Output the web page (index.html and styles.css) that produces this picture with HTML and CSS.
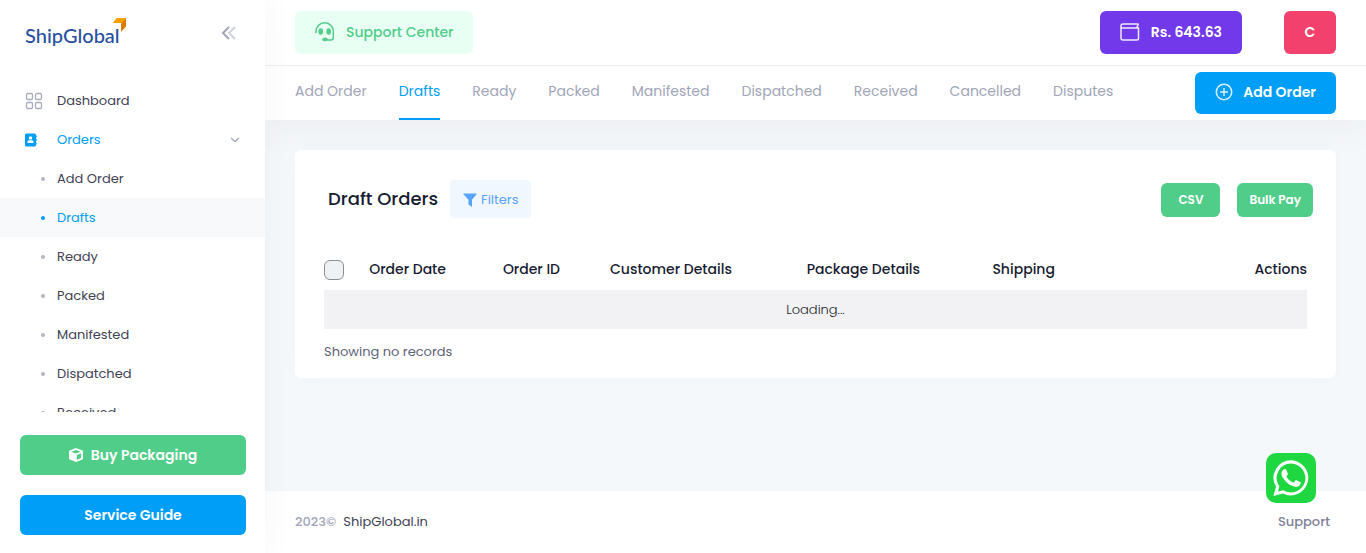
FILE: index.html
```html
<!DOCTYPE html>
<html lang="en">
<head>
<meta charset="utf-8">
<meta name="viewport" content="width=device-width, initial-scale=1">
<title>Draft Orders - ShipGlobal</title>
<link rel="stylesheet" href="styles.css">
</head>
<body>
<div class="layout">
  <aside class="sidebar">
    <div class="brand">
      <a class="logo" href="#">ShipGlobal<svg class="logo-mark" viewBox="0 0 14 14" aria-hidden="true"><path fill="#f9a000" d="M3.500 0H13L9 5H0z"/><path fill="#d97c06" d="M13 0v8.500L8 14V5.500z"/><path fill="#f29100" d="M9 5l4-5-4 6z"/></svg></a>
      <button class="collapse" type="button" aria-label="Collapse menu">
        <svg width="16" height="16" viewBox="0 0 16 16" fill="none" stroke-width="2"><path stroke="#a1a5b7" d="M8 2L2 8l6 6"/><path stroke="#d0d2dc" d="M14 2L8 8l6 6"/></svg>
      </button>
    </div>
    <nav class="menu" aria-label="Main">
      <a class="item" href="#"><span class="icon"><svg width="18" height="18" viewBox="0 0 18 18" fill="none" stroke="#a9abbd" stroke-width="1.300"><rect x="1.500" y="1.500" width="6" height="6" rx="1.300"/><rect x="10.500" y="1.500" width="6" height="6" rx="1.300"/><rect x="1.500" y="10.500" width="6" height="6" rx="1.300"/><rect x="10.500" y="10.500" width="6" height="6" rx="1.300"/></svg></span>Dashboard</a>
      <a class="item active" href="#"><span class="icon"><svg width="13" height="14" viewBox="0 0 13 14"><path fill="#009ef7" d="M1.500.5h8A1.500 1.500 0 0 1 11 2v10a1.500 1.500 0 0 1-1.500 1.500h-8A1.500 1.500 0 0 1 0 12V2A1.500 1.500 0 0 1 1.500.5zM11.300 2.500h.7v2h-.7zM11.300 6h.7v2h-.7zM11.300 9.500h.7v2h-.7z"/><circle cx="5.500" cy="5" r="1.700" fill="#fff"/><path fill="#fff" d="M2.500 10V9c0-1.100.9-1.700 2-1.700h2c1.100 0 2 .6 2 1.700v1z"/></svg></span>Orders<svg class="chevron" width="10" height="6" viewBox="0 0 10 6" fill="none" stroke="#a9abbd" stroke-width="1.500"><path d="M1 1l3.300 3q.7.600 1.400 0L9 1"/></svg></a>
      <a class="item sub" href="#">Add Order</a>
      <a class="item sub active current" href="#">Drafts</a>
      <a class="item sub" href="#">Ready</a>
      <a class="item sub" href="#">Packed</a>
      <a class="item sub" href="#">Manifested</a>
      <a class="item sub" href="#">Dispatched</a>
      <a class="item sub" href="#">Received</a>
    </nav>
    <div class="sidebar-actions">
      <button class="btn green" type="button"><svg width="14" height="14" viewBox="0 0 14 14"><path fill="#fff" d="M7 0l6.300 2.600q.7.300.7 1v6.800q0 .7-.7 1L7 14 .7 11.400q-.7-.3-.7-1V3.600q0-.7.7-1z"/><path fill="#50cd89" d="M2.300 3.800L7 2l4.700 1.800L7 5.600z"/><path fill="#50cd89" d="M7.800 7l4.300-1.800V10l-4.300 2z"/></svg>Buy Packaging</button>
      <button class="btn blue" type="button">Service Guide</button>
    </div>
  </aside>

  <div class="page">
    <header class="header">
      <div class="topbar">
        <button class="btn support" type="button"><svg width="20" height="20" viewBox="0 0 20 20" fill="none" stroke="#50cd89" stroke-width="1.500"><path d="M1 11V9.500a8.500 8.500 0 0 1 17.300 0v6.300q0 2.200-2.200 2.200H11"/><rect x="4.200" y="7" width="3" height="5" rx="1.500" fill="#50cd89"/><rect x="12.200" y="7" width="3" height="5" rx="1.500" fill="#50cd89"/><rect x="8" y="16.600" width="4" height="2" rx="1" fill="#50cd89"/></svg>Support Center</button>
        <div class="account">
          <button class="btn wallet" type="button"><svg width="20" height="18" viewBox="0 0 20 18" fill="none" stroke="#f0eafd" stroke-width="1.500"><path d="M18.500 1H3Q1 1 1 3v12q0 2 2 2h14q1.500 0 1.500-1.500V5H2Q1 5 1 3.500M18.500 1l-2 4"/></svg>Rs. 643.63</button>
          <button class="btn avatar" type="button" aria-label="Account C">C</button>
        </div>
      </div>
      <div class="tabbar">
        <nav class="tabs" aria-label="Orders">
          <a href="#">Add Order</a>
          <a class="selected" href="#">Drafts</a>
          <a href="#">Ready</a>
          <a href="#">Packed</a>
          <a href="#">Manifested</a>
          <a href="#">Dispatched</a>
          <a href="#">Received</a>
          <a href="#">Cancelled</a>
          <a href="#">Disputes</a>
        </nav>
        <button class="btn blue add" type="button"><svg width="18" height="18" viewBox="0 0 18 18" fill="none" stroke="#d9f0fe" stroke-width="1.500"><circle cx="9" cy="9" r="7.700"/><path d="M9 5v8M5 9h8"/></svg>Add Order</button>
      </div>
    </header>

    <main class="content">
      <section class="card">
        <div class="card-head">
          <h1>Draft Orders</h1>
          <button class="filters" type="button"><svg width="14" height="14" viewBox="0 0 14 14"><path fill="#58a3ff" d="M.8.500h12.400q.8 0 .4.800L9 6.800V13q0 1-.8.400L5.500 11.500V6.800L.4 1.300Q0 .5.800.5z"/></svg>Filters</button>
          <div class="exports">
            <button class="btn green small csv" type="button">CSV</button>
            <button class="btn green small" type="button">Bulk Pay</button>
          </div>
        </div>
        <table class="orders">
          <colgroup><col class="c-check"><col class="c-date"><col class="c-id"><col class="c-customer"><col class="c-package"><col class="c-shipping"><col></colgroup>
          <thead>
            <tr><th><input type="checkbox" aria-label="Select all orders"></th><th>Order Date</th><th>Order ID</th><th>Customer Details</th><th>Package Details</th><th>Shipping</th><th class="end">Actions</th></tr>
          </thead>
          <tbody><tr><td colspan="7">Loading...</td></tr></tbody>
        </table>
        <p class="summary">Showing no records</p>
      </section>
    </main>

    <footer class="footer">
      <div><span class="year">2023©</span><a class="site" href="#">ShipGlobal.in</a></div>
      <a class="help" href="#">Support</a>
    </footer>
  </div>
</div>
<a class="whatsapp" href="#" aria-label="WhatsApp"><svg width="38" height="38" viewBox="0 0 24 24" fill="#fff"><path d="M17.472 14.382c-.297-.149-1.758-.867-2.030-.967-.273-.099-.471-.148-.670.150-.197.297-.767.966-.940 1.164-.173.199-.347.223-.644.075-.297-.150-1.255-.463-2.390-1.475-.883-.788-1.480-1.761-1.653-2.059-.173-.297-.018-.458.130-.606.134-.133.298-.347.446-.520.149-.174.198-.298.298-.497.099-.198.050-.371-.025-.520-.075-.149-.669-1.612-.916-2.207-.242-.579-.487-.500-.669-.510-.173-.008-.371-.010-.570-.010-.198 0-.520.074-.792.372-.272.297-1.040 1.016-1.040 2.479 0 1.462 1.065 2.875 1.213 3.074.149.198 2.096 3.200 5.077 4.487.709.306 1.262.489 1.694.625.712.227 1.360.195 1.871.118.571-.085 1.758-.719 2.006-1.413.248-.694.248-1.289.173-1.413-.074-.124-.272-.198-.570-.347"/><path fill-rule="evenodd" d="M12.050.8a11.100 11.100 0 0 0-9.500 16.800L.9 23.300l5.900-1.500A11.100 11.100 0 1 0 12.050.8zm0 2.100a9.100 9.100 0 1 1-4.900 16.800l-3.400.9.900-3.300A9.100 9.100 0 0 1 12.050 2.900z"/></svg></a>
</body>
</html>
```
FILE: styles.css
```css
*, *::before, *::after { box-sizing: border-box; }

body {
  margin: 0;
  background: #f5f8fa;
  color: #3f4254;
  font-family: Poppins, Inter, "Open Sans", sans-serif;
  font-size: 13px;
  line-height: 20px;
}

a { color: inherit; text-decoration: none; }
button { font: inherit; border: 0; cursor: pointer; }
svg { display: block; flex: none; }

.layout { display: flex; min-height: 100vh; }

/* Sidebar */
.sidebar {
  position: sticky;
  top: 0;
  z-index: 2;
  display: flex;
  flex: none;
  flex-direction: column;
  width: 265px;
  height: 100vh;
  background: #fff;
  box-shadow: 0 0 28px rgba(82, 63, 105, 0.05);
}

.brand {
  display: flex;
  flex: none;
  align-items: center;
  justify-content: space-between;
  height: 65px;
  padding: 0 28px 0 25px;
}

.logo {
  position: relative;
  margin-top: 4px;
  color: #2850a0;
  font-family: Lato, sans-serif;
  font-size: 20px;
  font-weight: 500;
  line-height: 24px;
}

.logo-mark {
  position: absolute;
  top: -5px;
  right: -7px;
  width: 14px;
  height: 14px;
}

.collapse { padding: 0; background: none; }

.menu { flex: 1; min-height: 0; padding-top: 16px; overflow: hidden; }

.item {
  display: flex;
  align-items: center;
  height: 39px;
  padding: 0 25px;
}

.icon { width: 32px; }
.sub::before {
  width: 4px;
  height: 4px;
  margin: 0 12px 0 16px;
  border-radius: 50%;
  background: #b5b5c3;
  content: "";
}
.active { color: #009ef7; }
.active::before { background: #009ef7; }
.current { background: #f7f9fb; }
.chevron { margin-left: auto; }

.sidebar-actions {
  display: flex;
  flex: none;
  flex-direction: column;
  gap: 20px;
  padding: 23px 19px 18px 20px;
}

/* Buttons */
.btn {
  display: flex;
  align-items: center;
  justify-content: center;
  height: 40px;
  padding-bottom: 2px;
  border-radius: 6px;
  color: #fff;
  font-size: 14px;
  font-weight: 600;
  white-space: nowrap;
}
.sidebar-actions .btn { gap: 8px; }
.green { background: #50cd89; }
.blue { background: #009ef7; }
.support, .wallet { gap: 11px; height: 43px; padding: 0 20px 2px; }
.support { background: #e8fff3; color: #50cd89; font-weight: 500; }
.wallet { background: #7239ea; }
.avatar { width: 52px; height: 43px; background: #f1416c; }
.add { gap: 10px; height: 42px; padding: 0 20px 2px; }
.small { height: 34px; padding: 0 12px; font-size: 12px; }
.csv { padding: 0 17px; }

/* Header */
.page { display: flex; flex: 1; flex-direction: column; min-width: 0; }

.header {
  background: #fff;
  box-shadow: 0 10px 30px rgba(82, 63, 105, 0.05);
}

.topbar, .tabbar {
  display: flex;
  align-items: center;
  justify-content: space-between;
  padding: 0 30px;
}
.topbar { height: 66px; border-bottom: 1px solid #eff0f2; }
.tabbar { height: 54px; }
.account { display: flex; gap: 42px; }

.tabs {
  display: flex;
  gap: 32px;
  align-self: stretch;
  color: #a1a5b7;
  font-size: 14px;
}
.tabs a { padding-top: 15px; }
.tabs .selected { border-bottom: 2px solid #009ef7; color: #009ef7; }

/* Content */
.content { flex: 1; padding: 30px; }

.card {
  padding: 30px 29px 16px;
  border-radius: 6px;
  background: #fff;
  box-shadow: 0 0 20px rgba(76, 87, 125, 0.02);
}

.card-head { display: flex; align-items: center; padding-left: 4px; }

h1 {
  margin: 0 12px 0 0;
  color: #181c32;
  font-size: 18px;
  font-weight: 500;
  line-height: 24px;
}

.filters {
  display: flex;
  align-items: center;
  gap: 4px;
  height: 38px;
  padding: 2px 13px 0;
  border-radius: 4px;
  background: #f1f7ff;
  color: #58a3ff;
}

.exports { display: flex; gap: 17px; margin: 2px -6px 0 auto; }

.orders {
  width: 100%;
  margin-top: 32px;
  border-collapse: collapse;
  table-layout: fixed;
}
.c-check { width: 4.6%; }
.c-date { width: 13.6%; }
.c-id { width: 10.9%; }
.c-customer { width: 20%; }
.c-package { width: 18.9%; }
.c-shipping { width: 16%; }

th {
  height: 40px;
  padding: 0 0 2px;
  color: #181c32;
  font-size: 14px;
  font-weight: 500;
  text-align: left;
}
th:first-child { padding: 0; }
.end { text-align: right; }
td {
  height: 39px;
  padding: 0;
  background: #f2f2f4;
  color: #212529;
  font-weight: 300;
  text-align: center;
}

input[type="checkbox"] {
  display: block;
  width: 20px;
  height: 20px;
  margin: 0;
  border: 1px solid #8c8e91;
  border-radius: 6px;
  background: #eff2f5;
  appearance: none;
}
input[type="checkbox"]:checked { background: #009ef7; }

.summary { margin: 13px 0 0; color: #5e6278; }

/* Footer */
.footer {
  display: flex;
  align-items: center;
  justify-content: space-between;
  height: 62px;
  padding: 0 36px 0 30px;
  background: #fff;
}
.year { margin-right: 7px; color: #a1a5b7; font-weight: 500; }
.help { color: #7e8299; font-weight: 500; }

.whatsapp {
  position: fixed;
  right: 50px;
  bottom: 50px;
  z-index: 3;
  display: grid;
  place-items: center;
  width: 50px;
  height: 50px;
  border-radius: 10px;
  background: #1ed741;
}
```
